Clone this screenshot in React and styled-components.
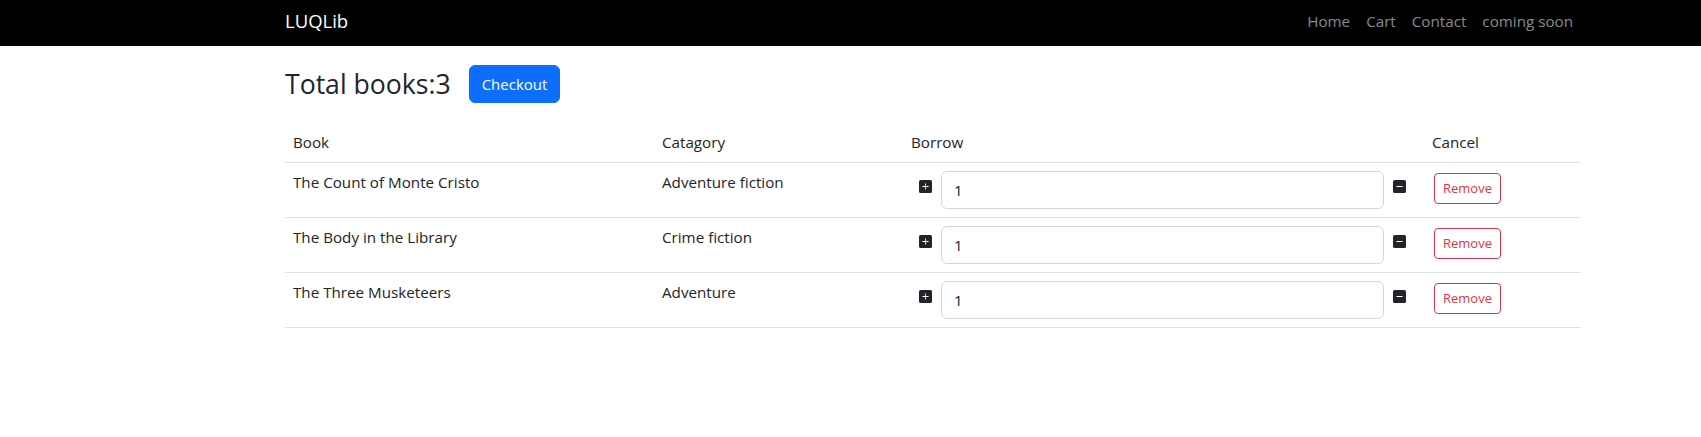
import React from 'react';
import styled, { createGlobalStyle } from 'styled-components';
import { BsPlusSquareFill, BsDashSquareFill } from 'react-icons/bs';

const GlobalStyle = createGlobalStyle`
  * { box-sizing: border-box; }
  body {
    margin: 0;
    background: #fff;
    color: #212529;
    font-family: "Open Sans", "Noto Sans", sans-serif;
    font-size: 15.2px;
    line-height: 1.5;
  }
`;

const Navbar = styled.nav`
  background: #000;
  height: 46px;
  display: flex;
  align-items: center;
  justify-content: space-between;
  padding: 0 120px 4px 285px;
`;

const Brand = styled.a`
  color: #fff;
  font-size: 18.5px;
  text-decoration: none;
`;

const NavLinks = styled.div`
  display: flex;
  a {
    color: rgba(255, 255, 255, 0.55);
    text-decoration: none;
    padding: 0 8px;
    font-size: 15.2px;
  }
`;

const Main = styled.main`
  width: 1296px;
  margin-left: 285px;
`;

const TitleRow = styled.div`
  display: flex;
  align-items: center;
  gap: 18px;
  margin-top: 19px;
  margin-bottom: 20px;
  h2 {
    margin: 0;
    font-size: 26.6px;
    font-weight: 400;
    line-height: 1.2;
    padding-top: 2px;
  }
`;

const Button = styled.button`
  font-family: inherit;
  cursor: pointer;
  border-radius: ${p => (p.small ? '4px' : '6px')};
  font-size: ${p => (p.small ? '13px' : '15px')};
  padding: ${p => (p.small ? '4px 8px' : '6px 12px')};
  line-height: ${p => (p.small ? '21px' : '24px')};
  height: ${p => (p.small ? '31px' : '38px')};
  color: ${p => (p.outline ? '#dc3545' : '#fff')};
  background: ${p => (p.outline ? '#fff' : '#0d6efd')};
  border: 1px solid ${p => (p.outline ? '#dc3545' : '#0d6efd')};
`;

const Table = styled.table`
  width: 100%;
  border-collapse: collapse;
  th, td {
    text-align: left;
    vertical-align: top;
    padding: 8px;
    border-bottom: 1px solid #dee2e6;
  }
  th { font-weight: 400; }
`;

const Borrow = styled.div`
  display: flex;
  align-items: center;
  gap: 9px;
  padding: 0 10px 0 8px;
  svg {
    flex: none;
    color: #212529;
    width: 13px;
    height: 13px;
    margin-top: -6px;
  }
`;

const QtyInput = styled.input`
  flex: 1;
  min-width: 0;
  height: 38px;
  border: 1px solid #d3d7dc;
  border-radius: 6px;
  padding: 6px 12px;
  font-family: inherit;
  font-size: 15px;
  color: #212529;
`;

const RemoveCell = styled.td`
  && { padding-left: 10px; padding-top: 10px; }
`;

const books = [
  { title: 'The Count of Monte Cristo', cat: 'Adventure fiction' },
  { title: 'The Body in the Library', cat: 'Crime fiction' },
  { title: 'The Three Musketeers', cat: 'Adventure' },
];

export default function App() {
  return (
    <>
      <GlobalStyle />
      <Navbar>
        <Brand href="#">LUQLib</Brand>
        <NavLinks>
          <a href="#">Home</a>
          <a href="#">Cart</a>
          <a href="#">Contact</a>
          <a href="#">coming soon</a>
        </NavLinks>
      </Navbar>
      <Main>
        <TitleRow>
          <h2>Total books:3</h2>
          <Button>Checkout</Button>
        </TitleRow>
        <Table>
          <thead>
            <tr>
              <th style={{ width: 369 }}>Book</th>
              <th style={{ width: 249 }}>Catagory</th>
              <th style={{ width: 521 }}>Borrow</th>
              <th>Cancel</th>
            </tr>
          </thead>
          <tbody>
            {books.map(b => (
              <tr key={b.title}>
                <td>{b.title}</td>
                <td>{b.cat}</td>
                <td>
                  <Borrow>
                    <BsPlusSquareFill />
                    <QtyInput defaultValue="1" />
                    <BsDashSquareFill />
                  </Borrow>
                </td>
                <RemoveCell>
                  <Button small outline>Remove</Button>
                </RemoveCell>
              </tr>
            ))}
          </tbody>
        </Table>
      </Main>
    </>
  );
}
